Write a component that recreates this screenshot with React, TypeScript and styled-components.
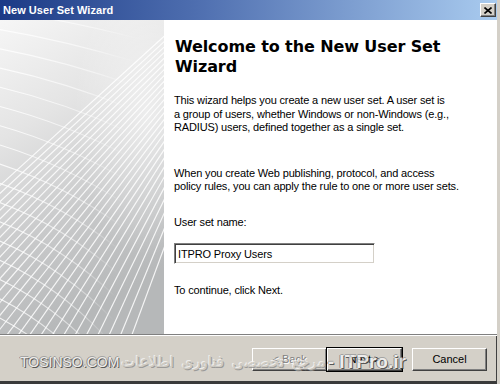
import React from "react";
import styled, { createGlobalStyle } from "styled-components";

const GlobalStyle = createGlobalStyle`
  html, body { margin: 0; padding: 0; background: #d4d0c8; overflow: hidden; }
  * { box-sizing: border-box; }
`;

const Window = styled.div`
  position: relative;
  width: 500px;
  height: 384px;
  display: flex;
  flex-direction: column;
  background: #d4d0c8;
  border-right: 3px solid #d4d0c8;
  box-shadow: inset -1px 0 0 #404040;
  font-family: "Liberation Sans", Arial, sans-serif;
  overflow: hidden;
`;

const TitleBar = styled.div`
  height: 20px;
  flex: none;
  display: flex;
  align-items: center;
  justify-content: space-between;
  padding: 0 1px 0 3px;
  background: linear-gradient(to right, #1b3a86 0%, #4f6fb0 40%, #a9cbef 100%);
`;

const TitleText = styled.span`
  color: #fff;
  font-weight: bold;
  font-size: 11px;
  letter-spacing: 0.05px;
`;

const CloseButton = styled.div`
  width: 16px;
  height: 14px;
  background: #d4d0c8;
  border-top: 1px solid #fff;
  border-left: 1px solid #fff;
  border-right: 1px solid #404040;
  border-bottom: 1px solid #404040;
  box-shadow: inset -1px -1px 0 #808080;
  display: flex;
  align-items: center;
  justify-content: center;
`;

const Main = styled.div`
  height: 314px;
  flex: none;
  display: flex;
`;

const SidePanel = styled.div`
  width: 164px;
  flex: none;
  overflow: hidden;
  svg { display: block; }
`;

const Content = styled.div`
  flex: 1;
  background: #fff;
  padding: 17px 10px 0 10px;
  display: flex;
  flex-direction: column;
`;

const Heading = styled.h1`
  margin: 0 0 0 1px;
  font-family: "DejaVu Sans", Verdana, sans-serif;
  font-weight: bold;
  font-size: 16px;
  line-height: 20px;
  color: #000;
  letter-spacing: -0.1px;
`;

const Para = styled.p<{ $top: number }>`
  margin: ${(p) => p.$top}px 0 0 0;
  font-size: 11px;
  line-height: 13.5px;
  color: #000;
  letter-spacing: -0.15px;
`;

const TextBox = styled.div`
  margin-top: 14px;
  width: 201px;
  height: 21px;
  border-top: 1px solid #808080;
  border-left: 1px solid #808080;
  border-right: 1px solid #fff;
  border-bottom: 1px solid #fff;
  box-shadow: inset 1px 1px 0 #404040, inset -1px -1px 0 #d4d0c8;
  padding: 0 3px;
  display: flex;
  align-items: center;
  font-size: 11px;
  color: #000;
  letter-spacing: -0.15px;
`;

const Separator = styled.div`
  height: 2px;
  flex: none;
  border-top: 1px solid #808080;
  border-bottom: 1px solid #fff;
`;

const ButtonBar = styled.div`
  flex: 1;
  display: flex;
  justify-content: flex-end;
  align-items: flex-start;
  padding: 12px 10px 0 0;
  border-bottom: 3px solid #3a3a3a;
`;

const Button = styled.div<{ $default?: boolean; $disabled?: boolean; $gap?: number }>`
  width: 75px;
  height: 23px;
  margin-left: ${(p) => p.$gap ?? 0}px;
  background: #d4d0c8;
  border-top: 1px solid #fff;
  border-left: 1px solid #fff;
  border-right: 1px solid #404040;
  border-bottom: 1px solid #404040;
  box-shadow: inset -1px -1px 0 #808080;
  outline: ${(p) => (p.$default ? "1px solid #000" : "none")};
  outline-offset: 0;
  display: flex;
  align-items: center;
  justify-content: center;
  padding-bottom: 2px;
  font-size: 11px;
  color: ${(p) => (p.$disabled ? "#808080" : "#000")};
  text-shadow: ${(p) => (p.$disabled ? "1px 1px 0 #fff" : "none")};
`;

const Watermark = styled.div`
  position: absolute;
  left: 20px;
  top: 351px;
  display: flex;
  align-items: center;
  white-space: nowrap;
  pointer-events: none;
  opacity: 0.8;
`;

const WmLatin = styled.span<{ $size: number; $bold?: boolean }>`
  font-family: "Liberation Sans", Arial, sans-serif;
  font-size: ${(p) => p.$size}px;
  font-weight: ${(p) => (p.$bold ? "bold" : "normal")};
  color: #f4f4f4;
  text-shadow: 1px 1px 0 #3a3a3a, -1px 0 0 #7a7a7a, 0 -1px 0 #9a9a9a;
`;

const WmPersian = styled.span`
  font-family: "DejaVu Sans", "Noto Sans", sans-serif;
  font-size: 15px;
  color: #ccc9c2;
  text-shadow: -1px -1px 0 #f6f6f6, 1px 1px 0 #8d8d8d;
  margin: 0 2px 0 2px;
  word-spacing: 3px;
`;

function SideArt() {
  const famA: string[] = [];
  for (let k = 0; k <= 26; k++) {
    const t = k / 26;
    const x0 = -170 + 300 * t;
    const y0 = 320;
    const x2 = 215;
    const y2 = -30 + 120 * t;
    const cx = x0 + 0.45 * (x2 - x0);
    const cy = y0 - 0.45 * (y0 - y2);
    famA.push(`M${x0.toFixed(1)} ${y0} Q${cx.toFixed(1)} ${cy.toFixed(1)} ${x2} ${y2.toFixed(1)}`);
  }
  const famB: string[] = [];
  for (let k = 0; k <= 18; k++) {
    const y0 = -30 + k * 19;
    const x0 = -10;
    const x2 = 140 - k * 2;
    const y2 = y0 + 25 + k * 4.5;
    const cx = 60;
    const cy = y0 + 8 + k * 1.5;
    famB.push(`M${x0} ${y0} Q${cx} ${cy.toFixed(1)} ${x2} ${y2.toFixed(1)}`);
  }
  return (
    <svg width="164" height="314" viewBox="0 0 164 314">
      <defs>
        <linearGradient id="bg" x1="0" y1="0" x2="0.3" y2="1">
          <stop offset="0" stopColor="#f6f6f6" />
          <stop offset="0.35" stopColor="#e4e4e4" />
          <stop offset="0.7" stopColor="#c8c9ca" />
          <stop offset="1" stopColor="#b6b8b9" />
        </linearGradient>
        <radialGradient id="hl" cx="0.9" cy="0.3" r="0.45">
          <stop offset="0" stopColor="#ffffff" stopOpacity="0.55" />
          <stop offset="1" stopColor="#ffffff" stopOpacity="0" />
        </radialGradient>
        <linearGradient id="fadeB" x1="0" y1="0" x2="1" y2="0">
          <stop offset="0" stopColor="#fff" stopOpacity="0.9" />
          <stop offset="0.7" stopColor="#fff" stopOpacity="0.5" />
          <stop offset="1" stopColor="#fff" stopOpacity="0" />
        </linearGradient>
      </defs>
      <rect width="164" height="314" fill="url(#bg)" />
      <rect width="164" height="314" fill="url(#hl)" />
      <g fill="none" stroke="#ffffff" strokeWidth="1.2" opacity="0.85">
        {famA.map((d, i) => (
          <path key={i} d={d} />
        ))}
      </g>
      <g fill="none" stroke="url(#fadeB)" strokeWidth="1.1">
        {famB.map((d, i) => (
          <path key={i} d={d} />
        ))}
      </g>
    </svg>
  );
}

export default function App() {
  return (
    <>
      <GlobalStyle />
      <Window>
        <TitleBar>
          <TitleText>New User Set Wizard</TitleText>
          <CloseButton>
            <svg width="8" height="7" viewBox="0 0 8 7">
              <path d="M0.5 0.5 L7.5 6.5 M7.5 0.5 L0.5 6.5" stroke="#000" strokeWidth="1.6" />
            </svg>
          </CloseButton>
        </TitleBar>
        <Main>
          <SidePanel>
            <SideArt />
          </SidePanel>
          <Content>
            <Heading>
              Welcome to the New User Set
              <br />
              Wizard
            </Heading>
            <Para $top={17}>
              This wizard helps you create a new user set. A user set is
              <br />
              a group of users, whether Windows or non-Windows (e.g.,
              <br />
              RADIUS) users, defined together as a single set.
            </Para>
            <Para $top={32}>
              When you create Web publishing, protocol, and access
              <br />
              policy rules, you can apply the rule to one or more user sets.
            </Para>
            <Para $top={22}>User set name:</Para>
            <TextBox>ITPRO Proxy Users</TextBox>
            <Para $top={20}>To continue, click Next.</Para>
          </Content>
        </Main>
        <Separator />
        <ButtonBar>
          <Button $disabled>&lt; Back</Button>
          <Button $default>Next &gt;</Button>
          <Button $gap={10}>Cancel</Button>
        </ButtonBar>
        <Watermark>
          <WmLatin $size={14}>TOSINSO.COM</WmLatin>
          <WmPersian dir="rtl">مرجع تخصصی فناوری اطلاعات</WmPersian>
          <WmLatin $size={19} $bold>- ITPro.ir</WmLatin>
        </Watermark>
      </Window>
    </>
  );
}
